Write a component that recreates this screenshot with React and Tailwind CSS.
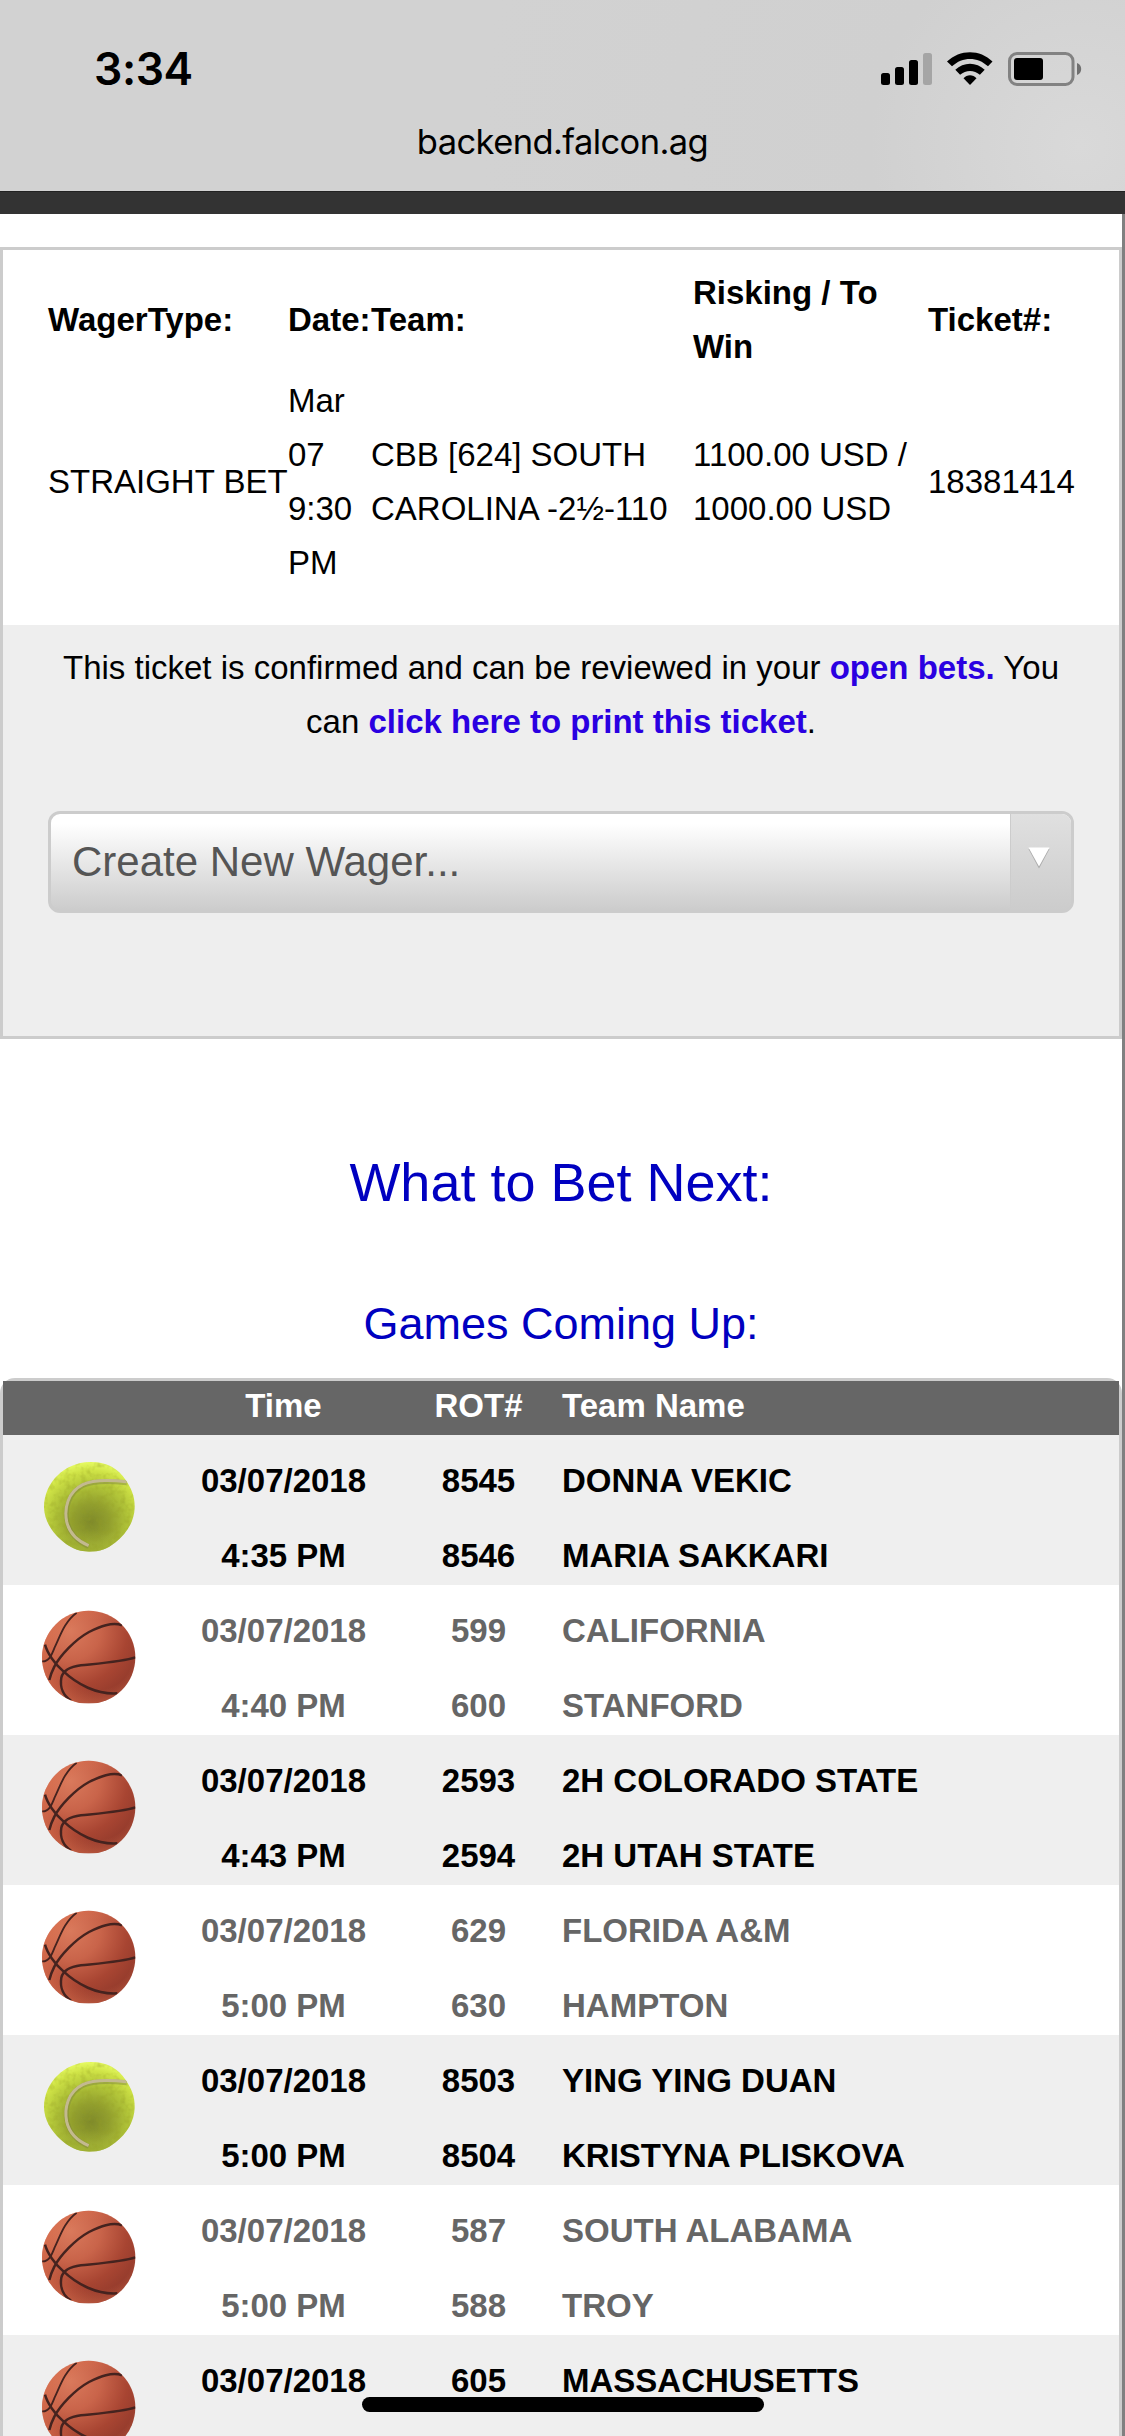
import React from 'react';

const games = [
  { sport: 'tennis', date: '03/07/2018', time: '4:35 PM', rot: [8545, 8546], teams: ['DONNA VEKIC', 'MARIA SAKKARI'] },
  { sport: 'basketball', date: '03/07/2018', time: '4:40 PM', rot: [599, 600], teams: ['CALIFORNIA', 'STANFORD'] },
  { sport: 'basketball', date: '03/07/2018', time: '4:43 PM', rot: [2593, 2594], teams: ['2H COLORADO STATE', '2H UTAH STATE'] },
  { sport: 'basketball', date: '03/07/2018', time: '5:00 PM', rot: [629, 630], teams: ['FLORIDA A&M', 'HAMPTON'] },
  { sport: 'tennis', date: '03/07/2018', time: '5:00 PM', rot: [8503, 8504], teams: ['YING YING DUAN', 'KRISTYNA PLISKOVA'] },
  { sport: 'basketball', date: '03/07/2018', time: '5:00 PM', rot: [587, 588], teams: ['SOUTH ALABAMA', 'TROY'] },
  { sport: 'basketball', date: '03/07/2018', rot: [605], teams: ['MASSACHUSETTS'] },
];

function TennisBall() {
  return (
    <svg width="96" height="94" viewBox="63 60 288 282">
      <defs>
        <radialGradient id="felt" cx="0.52" cy="0.66" r="0.64">
          <stop offset="0" stopColor="#7f8a2a" />
          <stop offset="0.3" stopColor="#929f2e" />
          <stop offset="0.6" stopColor="#b0c338" />
          <stop offset="0.85" stopColor="#cfe346" />
          <stop offset="1" stopColor="#e6fb62" />
        </radialGradient>
        <linearGradient id="feltEdge" x1="0" y1="0" x2="0" y2="1">
          <stop offset="0.75" stopColor="#a3b236" stopOpacity="0" />
          <stop offset="1" stopColor="#9fb035" stopOpacity="0.8" />
        </linearGradient>
        <filter id="fuzz" x="0" y="0" width="1" height="1">
          <feTurbulence type="fractalNoise" baseFrequency="0.06" numOctaves="2" seed="4" />
          <feColorMatrix values="0 0 0 0 0.3  0 0 0 0 0.34  0 0 0 0 0.02  2 0 0 0 -0.9" />
          <feComposite in2="SourceGraphic" operator="in" />
        </filter>
        <clipPath id="tennisClip">
          <path d="M208 66C258 64 295 85 317 120C334 146 345 168 344 203C343 242 322 280 285 308C262 326 240 335 207 335C172 334 147 322 121 298C91 270 73 239 72 202C73 124 136 68 208 66Z" />
        </clipPath>
      </defs>
      <g clipPath="url(#tennisClip)">
        <rect x="63" y="60" width="288" height="282" fill="url(#felt)" />
        <rect x="63" y="60" width="288" height="282" fill="url(#feltEdge)" />
        <rect x="63" y="60" width="288" height="282" fill="#000" filter="url(#fuzz)" opacity="0.45" />
        <path d="M320 129C270 123 220 121 188 137C145 160 134 206 142 247C150 282 176 306 206 320" fill="none" stroke="#7d8340" strokeWidth="14" opacity="0.45" />
        <path d="M320 125C270 120 220 118 188 134C143 156 132 206 140 245C148 280 175 304 206 317" fill="none" stroke="#c3b98f" strokeWidth="9" />
      </g>
    </svg>
  );
}

function Basketball() {
  return (
    <svg width="96" height="94" viewBox="63 510 288 282">
      <defs>
        <radialGradient id="leather" cx="0.3" cy="0.22" r="0.8">
          <stop offset="0" stopColor="#da7a5c" />
          <stop offset="0.4" stopColor="#c9644a" />
          <stop offset="0.75" stopColor="#a84532" />
          <stop offset="1" stopColor="#943b2c" />
        </radialGradient>
        <radialGradient id="leatherRim" cx="0.58" cy="0.48" r="0.58">
          <stop offset="0.65" stopColor="#df7350" stopOpacity="0" />
          <stop offset="1" stopColor="#df7350" stopOpacity="0.6" />
        </radialGradient>
        <clipPath id="basketClip">
          <ellipse cx="206" cy="652" rx="140" ry="139.500" />
        </clipPath>
      </defs>
      <g clipPath="url(#basketClip)">
        <rect x="63" y="510" width="288" height="280" fill="url(#leather)" />
        <rect x="63" y="510" width="288" height="280" fill="url(#leatherRim)" />
        <g fill="none" stroke="#45231f" strokeWidth="7.5">
          <path d="M170 518C132 546 120 590 104 622C96 642 88 666 66 664" strokeWidth="5.500" />
          <path d="M306 556C276 545 240 560 207 576C165 599 121 646 103 680C96 694 91 706 88 720" />
          <path d="M346 652C312 664 250 669 183 676C151 680 129 692 124 713C119 743 131 768 153 782" />
          <path d="M75 614C82 640 105 672 128 692C172 734 231 764 292 760" />
        </g>
      </g>
    </svg>
  );
}

function StatusIcons() {
  return (
    <svg width="206" height="40" viewBox="880 49 206 40">
      <rect x="881" y="73" width="9" height="12" rx="2.5" />
      <rect x="895" y="67" width="9" height="18" rx="2.5" />
      <rect x="909" y="60" width="9" height="25" rx="2.5" />
      <rect x="923" y="53" width="9" height="32" rx="2.5" fill="#a5a5a5" />
      <path d="M947 61.5C960 49 980 49 992.500 61.500L988 66.300C977.500 56.500 962.500 56.500 952 66.300Z" />
      <path d="M955.300 69.800C963.500 61.700 976.500 61.700 984.700 69.800L979.900 74.800C974.200 69.600 965.800 69.600 960.100 74.800Z" />
      <path d="M963.500 78.300C967 74.200 973 74.200 976.500 78.300L970 85Z" />
      <rect x="1009.500" y="53.500" width="63.500" height="31" rx="7.500" fill="none" stroke="#828282" strokeWidth="3" />
      <rect x="1014" y="58" width="29" height="22" rx="3" />
      <path d="M1077 63C1080 64 1081.200 66.500 1081.200 69S1080 74 1077 75Z" fill="#707070" />
    </svg>
  );
}

function BrowserHeader() {
  return (
    <header className="h-[191px] bg-[#d2d2d2] bg-[radial-gradient(circle_at_1080px_145px,#d9d9d9_0,#d0d0d0_210px,#d2d2d2_600px)] font-[Inter,sans-serif] text-black">
      <div className="flex h-[112px] items-start justify-between pt-[49px] pr-[39px] pl-[94px]">
        <span className="text-[44.500px] leading-[41px] font-semibold tracking-[-0.4px]">3:34</span>
        <StatusIcons />
      </div>
      <div className="text-center text-[34.500px] leading-[60px] tracking-[-0.600px]">backend.falcon.ag</div>
    </header>
  );
}

function TicketCard() {
  return (
    <section className="mt-[33px] border-3 border-[#ccc]">
      <div className="grid h-[375px] grid-cols-[240px_83px_322px_235px_1fr] content-start items-center bg-white pt-[16px] pl-[45px]">
        <b>WagerType:</b>
        <b>Date:</b>
        <b>Team:</b>
        <b>Risking / To Win</b>
        <b>Ticket#:</b>
        <span className="whitespace-nowrap">STRAIGHT BET</span>
        <span>Mar 07 9:30 PM</span>
        <span>CBB [624] SOUTH CAROLINA -2½-110</span>
        <span>1100.00 USD / 1000.00 USD</span>
        <span>18381414</span>
      </div>
      <div className="h-[411px] bg-[#eee] px-[45px] pt-[16px]">
        <p className="text-center">
          This ticket is confirmed and can be reviewed in your <a className="font-bold text-[#2a00e1]">open bets.</a> You can{' '}
          <a className="font-bold text-[#2a00e1]">click here to print this ticket</a>.
        </p>
        <div className="mt-[62px] flex h-[102px] w-[1026px] overflow-hidden rounded-xl border-3 border-[#ccc] bg-linear-to-b from-white from-10% to-[#ccc]">
          <span className="flex-1 pl-[21px] text-[42px] leading-[96px] text-[#555]">Create New Wager...</span>
          <div className="flex w-[61px] justify-center border-l border-[#ccc] bg-linear-to-b from-[#e0e0e0] to-[#ccc] pt-[33px]">
            <svg width="22" height="22" viewBox="0 0 22 22" className="-ml-[5px]">
              <path d="M0.500 2L11 21.500L21.500 2Z" fill="#aaa" />
              <path d="M0.500 0.500H21.500L11 19.500Z" fill="#fff" />
            </svg>
          </div>
        </div>
      </div>
    </section>
  );
}

function GameRow({ game, shaded }) {
  return (
    <div
      className={
        shaded
          ? 'grid h-[150px] grid-cols-[168px_225px_165px_1fr] bg-[#efefef] text-black'
          : 'grid h-[150px] grid-cols-[168px_225px_165px_1fr] bg-white text-[#666]'
      }
    >
      <div className="pt-[25px] pl-[38px]">{game.sport === 'tennis' ? <TennisBall /> : <Basketball />}</div>
      <div className="pt-[8px] text-center leading-[75px]">
        <div>{game.date}</div>
        {game.time && <div>{game.time}</div>}
      </div>
      <div className="pt-[8px] text-center leading-[75px]">
        {game.rot.map((rot) => <div key={rot}>{rot}</div>)}
      </div>
      <div className="pt-[8px] pl-px leading-[75px]">
        {game.teams.map((team) => <div key={team}>{team}</div>)}
      </div>
    </div>
  );
}

function GamesTable() {
  return (
    <section className="rounded-t-[15px] border-3 border-b-0 border-[#ccc] font-bold">
      <div className="grid h-[54px] grid-cols-[168px_225px_165px_1fr] bg-[#666] leading-[49px] text-white">
        <span />
        <span className="text-center">Time</span>
        <span className="text-center">ROT#</span>
        <span className="pl-px">Team Name</span>
      </div>
      {games.map((game, i) => (
        <GameRow key={game.rot[0]} game={game} shaded={i % 2 === 0} />
      ))}
    </section>
  );
}

export default function App() {
  return (
    <div className="relative h-[2436px] w-[1125px] overflow-hidden bg-white">
      <BrowserHeader />
      <div className="h-[23px] border-t border-[#222] bg-[#333]" />
      <main className="h-[2222px] overflow-hidden border-r-3 border-[#808080] font-['Liberation_Sans',Arial,sans-serif] text-[33px] leading-[54px] text-black">
        <TicketCard />
        <h1 className="mt-[108px] text-center text-[54px] leading-[70px] text-[#0000c0]">What to Bet Next:</h1>
        <h2 className="mt-[77px] mb-[24px] text-center text-[45px] leading-[60px] text-[#0000c0]">Games Coming Up:</h2>
        <GamesTable />
      </main>
      {/* home indicator */}
      <div className="absolute bottom-[24px] left-[362px] h-[15px] w-[402px] rounded-full bg-black" />
    </div>
  );
}
